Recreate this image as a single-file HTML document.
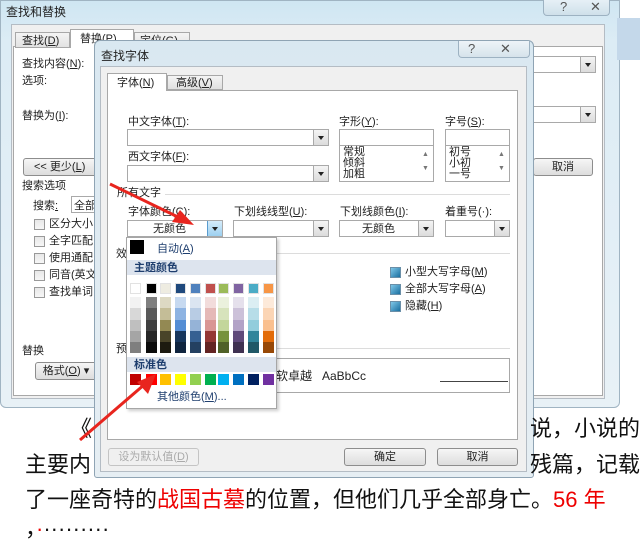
<!DOCTYPE html>
<html><head><meta charset="utf-8"><style>
*{margin:0;padding:0;box-sizing:border-box}
body{width:640px;height:526px;overflow:hidden;background:#fff;position:relative;font-family:"Liberation Sans","Noto Sans CJK SC",sans-serif;font-size:11px;color:#222}
.a{position:absolute}
.t{position:absolute;white-space:nowrap;line-height:12px}
.cb{position:absolute;background:#fff;border:1px solid #a9a9a9}
.ar{position:absolute;right:0;top:0;bottom:0;width:15px;background:linear-gradient(#f4f4f4,#dcdcdc);border-left:1px solid #a9a9a9}
.ar:after{content:"";position:absolute;left:4px;top:6px;border-left:3.5px solid transparent;border-right:3.5px solid transparent;border-top:4px solid #222}
.btn{position:absolute;border:1px solid #8d8d8d;border-radius:3px;background:linear-gradient(#f6f6f6,#dddddd);text-align:center;line-height:17px}
.chk{position:absolute;width:11px;height:11px;border:1px solid #999;background:linear-gradient(#e8e8e8,#f6f6f6)}
.bchk{position:absolute;width:11px;height:11px;border:1px solid #6a8fa8;background:linear-gradient(135deg,#7fc7e8,#1a6fa0)}
.sw{position:absolute;width:11px}
.big{position:absolute;font-size:22px;white-space:nowrap;line-height:26px;color:#111}
</style></head><body>
<div class="a" style="left:0;top:0;width:620px;height:408px;background:linear-gradient(#cfe6f2,#dcecf5 40px,#e8f1f6);border-radius:0 0 6px 6px;border:1px solid #a0b4c2"></div>
<div class="a" style="left:617px;top:18px;width:23px;height:42px;background:#c4d8ea"></div>
<div class="t" style="left:6px;top:6px;font-size:12px">查找和替换</div>
<div class="a" style="left:543px;top:0;width:67px;height:16px;border:1px solid #9db2c2;border-top:0;border-radius:0 0 4px 4px;background:linear-gradient(#e6f0f6,#cfe0ea)"></div>
<div class="t" style="left:560px;top:1px;font-size:13px;color:#555">?</div>
<div class="t" style="left:590px;top:1px;font-size:13px;color:#555">✕</div>
<div class="a" style="left:11px;top:24px;width:594px;height:375px;background:#f0f0f0;border:1px solid #b4bcc4"></div>
<div class="a" style="left:13px;top:46px;width:590px;height:350px;background:#fff;border:1px solid #a8a8a8"></div>
<div class="a" style="left:15px;top:32px;width:55px;height:16px;border:1px solid #a8a8a8;background:linear-gradient(#f4f4f4,#e2e2e2)"></div>
<div class="t" style="left:22px;top:35px">查找(<u>D</u>)</div>
<div class="a" style="left:70px;top:29px;width:64px;height:19px;border:1px solid #a8a8a8;border-bottom:0;background:#fff"></div>
<div class="t" style="left:80px;top:33px">替换(<u>P</u>)</div>
<div class="a" style="left:134px;top:32px;width:56px;height:16px;border:1px solid #a8a8a8;background:linear-gradient(#f4f4f4,#e2e2e2)"></div>
<div class="t" style="left:140px;top:35px">定位(<u>G</u>)</div>
<div class="t" style="left:22px;top:58px">查找内容(<u>N</u>):</div>
<div class="t" style="left:22px;top:75px">选项:</div>
<div class="t" style="left:22px;top:110px">替换为(<u>I</u>):</div>
<div class="cb" style="left:520px;top:56px;width:76px;height:17px"><div class="ar"></div></div>
<div class="cb" style="left:520px;top:106px;width:76px;height:17px"><div class="ar"></div></div>
<div class="btn" style="left:23px;top:158px;width:75px;height:18px;text-align:left;padding-left:10px">&lt;&lt; 更少(<u>L</u>)</div>
<div class="btn" style="left:533px;top:158px;width:60px;height:18px">取消</div>
<div class="t" style="left:22px;top:180px">搜索选项</div>
<div class="t" style="left:33px;top:200px">搜索<u>:</u></div>
<div class="cb" style="left:71px;top:196px;width:30px;height:17px"></div>
<div class="t" style="left:74px;top:200px">全部</div>
<div class="chk" style="left:34px;top:219px"></div><div class="t" style="left:49px;top:218px">区分大小</div>
<div class="chk" style="left:34px;top:236px"></div><div class="t" style="left:49px;top:235px">全字匹配</div>
<div class="chk" style="left:34px;top:253px"></div><div class="t" style="left:49px;top:252px">使用通配</div>
<div class="chk" style="left:34px;top:270px"></div><div class="t" style="left:49px;top:269px">同音(英文</div>
<div class="chk" style="left:34px;top:287px"></div><div class="t" style="left:49px;top:286px">查找单词</div>
<div class="t" style="left:22px;top:345px">替换</div>
<div class="btn" style="left:35px;top:362px;width:62px;height:18px">格式(<u>O</u>) ▾</div>
<div class="a" style="left:94px;top:40px;width:440px;height:438px;background:linear-gradient(#d9e8f1,#e6eef3);border:1px solid #8fa4b4;border-radius:6px 6px 3px 3px"></div>
<div class="t" style="left:101px;top:50px;font-size:12px">查找字体</div>
<div class="a" style="left:458px;top:41px;width:72px;height:17px;border:1px solid #9db2c2;border-top:0;border-radius:0 0 4px 4px;background:linear-gradient(#eef4f8,#d6e3eb)"></div>
<div class="t" style="left:468px;top:43px;font-size:13px;color:#555">?</div>
<div class="t" style="left:500px;top:43px;font-size:13px;color:#555">✕</div>
<div class="a" style="left:100px;top:66px;width:427px;height:406px;background:#f0f0f0;border:1px solid #b4bcc4"></div>
<div class="a" style="left:107px;top:90px;width:411px;height:350px;background:#fff;border:1px solid #a8a8a8"></div>
<div class="a" style="left:107px;top:73px;width:60px;height:18px;border:1px solid #a8a8a8;border-bottom:0;background:#fff"></div>
<div class="t" style="left:117px;top:77px">字体(<u>N</u>)</div>
<div class="a" style="left:167px;top:75px;width:56px;height:15px;border:1px solid #a8a8a8;background:linear-gradient(#f4f4f4,#e0e0e0)"></div>
<div class="t" style="left:176px;top:77px">高级(<u>V</u>)</div>
<div class="t" style="left:128px;top:116px">中文字体(<u>T</u>):</div>
<div class="cb" style="left:127px;top:129px;width:202px;height:17px"><div class="ar"></div></div>
<div class="t" style="left:128px;top:151px">西文字体(<u>F</u>):</div>
<div class="cb" style="left:127px;top:165px;width:202px;height:17px"><div class="ar"></div></div>
<div class="t" style="left:339px;top:116px">字形(<u>Y</u>):</div>
<div class="cb" style="left:339px;top:129px;width:95px;height:17px"></div>
<div class="cb" style="left:339px;top:145px;width:95px;height:37px"></div>
<div class="t" style="left:343px;top:147px;line-height:11px">常规<br>倾斜<br>加粗</div>
<div class="t" style="left:422px;top:148px;font-size:7px;color:#777;line-height:14px">▲<br>▼</div>
<div class="t" style="left:445px;top:116px">字号(<u>S</u>):</div>
<div class="cb" style="left:445px;top:129px;width:65px;height:17px"></div>
<div class="cb" style="left:445px;top:145px;width:65px;height:37px"></div>
<div class="t" style="left:449px;top:147px;line-height:11px">初号<br>小初<br>一号</div>
<div class="t" style="left:498px;top:148px;font-size:7px;color:#777;line-height:14px">▲<br>▼</div>
<div class="t" style="left:117px;top:187px">所有文字</div>
<div class="a" style="left:165px;top:194px;width:345px;height:1px;background:#dcdcdc"></div>
<div class="t" style="left:128px;top:206px">字体颜色(<u>C</u>):</div>
<div class="t" style="left:234px;top:206px">下划线线型(<u>U</u>):</div>
<div class="t" style="left:340px;top:206px">下划线颜色(<u>I</u>):</div>
<div class="t" style="left:445px;top:206px">着重号(·):</div>
<div class="cb" style="left:127px;top:220px;width:96px;height:17px"><div class="ar" style="background:linear-gradient(#d6ecfa,#9cd0f0);border-left-color:#5a9ccf"></div></div>
<div class="t" style="left:153px;top:223px">无颜色</div>
<div class="cb" style="left:233px;top:220px;width:96px;height:17px"><div class="ar"></div></div>
<div class="cb" style="left:339px;top:220px;width:95px;height:17px"><div class="ar"></div></div>
<div class="t" style="left:362px;top:223px">无颜色</div>
<div class="cb" style="left:445px;top:220px;width:65px;height:17px"><div class="ar"></div></div>
<div class="t" style="left:116px;top:248px">效</div>
<div class="a" style="left:276px;top:253px;width:234px;height:1px;background:#dcdcdc"></div>
<div class="bchk" style="left:390px;top:267px"></div><div class="t" style="left:405px;top:266px">小型大写字母(<u>M</u>)</div>
<div class="bchk" style="left:390px;top:284px"></div><div class="t" style="left:405px;top:283px">全部大写字母(<u>A</u>)</div>
<div class="bchk" style="left:390px;top:301px"></div><div class="t" style="left:405px;top:300px">隐藏(<u>H</u>)</div>
<div class="t" style="left:116px;top:343px">预</div>
<div class="a" style="left:276px;top:348px;width:234px;height:1px;background:#dcdcdc"></div>
<div class="a" style="left:270px;top:358px;width:240px;height:35px;background:#fff;border:1px solid #a8a8a8"></div>
<div class="t" style="left:276px;top:370px;font-size:12px">软卓越 &nbsp;&nbsp;AaBbCc</div>
<div class="a" style="left:440px;top:381px;width:68px;height:1px;background:#444"></div>
<div class="btn" style="left:108px;top:448px;width:91px;height:18px;color:#aaa;border-color:#c4c4c4;background:#f0f0f0">设为默认值(<u>D</u>)</div>
<div class="btn" style="left:344px;top:448px;width:82px;height:18px">确定</div>
<div class="btn" style="left:437px;top:448px;width:81px;height:18px">取消</div>
<div class="a" style="left:126px;top:237px;width:151px;height:172px;background:#fff;border:1px solid #a6a6a6;box-shadow:2px 2px 3px rgba(0,0,0,.2)"></div>
<div class="a" style="left:130px;top:240px;width:14px;height:14px;background:#000"></div>
<div class="t" style="left:157px;top:243px;color:#1e3e6e">自动(<u>A</u>)</div>
<div class="a" style="left:127px;top:260px;width:149px;height:15px;background:#dde4ee"></div>
<div class="t" style="left:134px;top:262px;font-weight:bold;color:#1e3e6e">主题颜色</div>
<div class="a" style="left:127px;top:357px;width:149px;height:15px;background:#dde4ee"></div>
<div class="t" style="left:134px;top:359px;font-weight:bold;color:#1e3e6e">标准色</div>
<div class="t" style="left:157px;top:391px;color:#1e3e6e">其他颜色(<u>M</u>)...</div>
<div id="pal"></div>
<script>
(function(){
var cols=[130,146,160,175,190,205,218,233,248,263];
var tr=["#ffffff","#000000","#eeece1","#1f497d","#4f81bd","#c0504d","#9bbb59","#8064a2","#4bacc6","#f79646"];
var sh=[["#f2f2f2","#d8d8d8","#bfbfbf","#a5a5a5","#7f7f7f"],["#7f7f7f","#595959","#3f3f3f","#262626","#0c0c0c"],["#ddd9c3","#c4bd97","#938953","#494429","#1d1b10"],["#c6d9f0","#8db3e2","#548dd4","#17365d","#0f243e"],["#dbe5f1","#b8cce4","#95b3d7","#366092","#244061"],["#f2dcdb","#e5b9b7","#d99694","#953734","#632423"],["#ebf1dd","#d7e3bc","#c3d69b","#76923c","#4f6128"],["#e5e0ec","#ccc1d9","#b2a2c7","#5f497a","#3f3151"],["#dbeef3","#b7dde8","#92cddc","#31859b","#205867"],["#fdeada","#fbd5b5","#fac08f","#e36c09","#974806"]];
var st=["#c00000","#ff0000","#ffc000","#ffff00","#92d050","#00b050","#00b0f0","#0070c0","#002060","#7030a0"];
var h="";
for(var i=0;i<10;i++){
h+='<div class="sw" style="left:'+cols[i]+'px;top:283px;height:11px;background:'+tr[i]+';border:1px solid #e2e2e2"></div>';
for(var j=0;j<5;j++)h+='<div class="sw" style="left:'+cols[i]+'px;top:'+(297+j*11.3)+'px;height:11.3px;background:'+sh[i][j]+'"></div>';
h+='<div class="sw" style="left:'+cols[i]+'px;top:374px;height:11px;background:'+st[i]+'"></div>';
}
document.getElementById('pal').innerHTML=h;
})();
</script>
<div class="big" style="left:70px;top:416px">《</div>
<div class="big" style="left:530px;top:416px">说，小说的</div>
<div class="big" style="left:25px;top:452px">主要内</div>
<div class="big" style="left:530px;top:452px">残篇，记载</div>
<div class="big" style="left:25px;top:487px">了一座奇特的<span style="color:#e00">战国古墓</span>的位置，但他们几乎全部身亡。<span style="color:#e00">56 年</span></div>
<div class="big" style="left:25px;top:516px">，<span style="color:#e00">·</span>·········</div>
<svg class="a" style="left:0;top:0;pointer-events:none" width="640" height="526">
<line x1="110" y1="184" x2="180" y2="218" stroke="#e8251e" stroke-width="3"/>
<polygon points="194,225 172,222 180,210" fill="#e8251e"/>
<line x1="80" y1="440" x2="145" y2="384" stroke="#e8251e" stroke-width="3"/>
<polygon points="156,374 148,394 137,382" fill="#e8251e"/>
</svg>
</body></html>
